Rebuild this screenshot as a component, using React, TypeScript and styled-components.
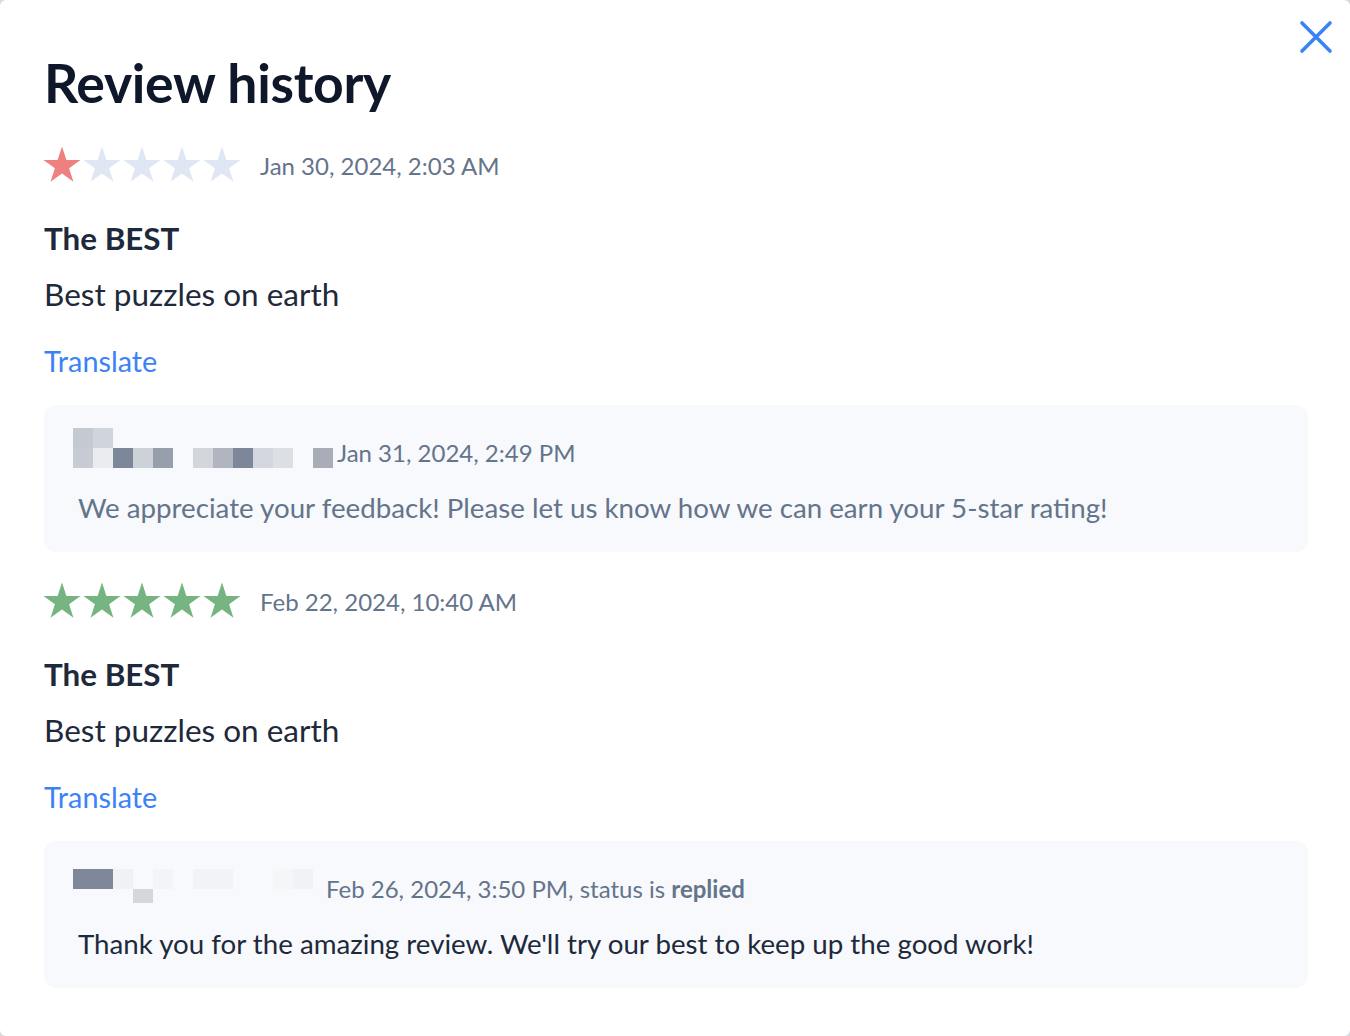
import React from 'react';
import styled, { createGlobalStyle } from 'styled-components';

const GlobalStyle = createGlobalStyle`
  html, body {
    margin: 0;
    padding: 0;
    background: #d6d9de;
  }
  body {
    font-family: Lato, "Noto Sans", "Liberation Sans", sans-serif;
    -webkit-font-smoothing: antialiased;
  }
`;

type Cell = string | null;

interface Reply {
  redacted: Cell[][];
  redactedOffset: number;
  redactedGap: number;
  date: string;
  status?: string;
  text: string;
  muted: boolean;
}

interface ReviewData {
  rating: number;
  date: string;
  title: string;
  body: string;
  reply: Reply;
}

const _ = null;

const reviews: ReviewData[] = [
  {
    rating: 1,
    date: 'Jan 30, 2024, 2:03 AM',
    title: 'The BEST',
    body: 'Best puzzles on earth',
    reply: {
      redacted: [
        ['#c4c9d2', '#d0d4db', _, _, _, _, _, _, _, _, _, _, _],
        ['#c7ccd4', '#eaecef', '#7d879a', '#cdd1d8', '#979fad', _, '#d3d6dc', '#b0b5bf', '#7d879a', '#d4d7dd', '#dcdfe3', _, '#a8adb8'],
      ],
      redactedOffset: -5,
      redactedGap: 4,
      date: 'Jan 31, 2024, 2:49 PM',
      text: 'We appreciate your feedback! Please let us know how we can earn your 5-star rating!',
      muted: true,
    },
  },
  {
    rating: 5,
    date: 'Feb 22, 2024, 10:40 AM',
    title: 'The BEST',
    body: 'Best puzzles on earth',
    reply: {
      redacted: [
        ['#7f889a', '#7f889a', '#eff1f4', _, '#f3f4f7', _, '#f2f3f6', '#f2f3f6', _, _, '#f5f6f8', '#f1f2f5'],
        [_, _, _, '#d3d7de', _, _, _, _, _, _, _, _],
      ],
      redactedOffset: 0,
      redactedGap: 13,
      date: 'Feb 26, 2024, 3:50 PM, status is ',
      status: 'replied',
      text: "Thank you for the amazing review. We'll try our best to keep up the good work!",
      muted: false,
    },
  },
];

const Card = styled.div`
  position: relative;
  box-sizing: border-box;
  min-height: 100vh;
  background: #ffffff;
  border-radius: 6px;
  padding: 50px 42px 40px 44px;
`;

const CloseButton = styled.button`
  position: absolute;
  top: 19px;
  right: 16px;
  width: 36px;
  height: 36px;
  padding: 0;
  border: none;
  background: transparent;
  cursor: pointer;
  svg {
    display: block;
  }
`;

const Title = styled.h1`
  margin: 0;
  font-size: 53.5px;
  line-height: 64px;
  font-weight: 700;
  color: #0f172a;
  letter-spacing: -0.3px;
`;

const ReviewList = styled.div`
  display: flex;
  flex-direction: column;
  gap: 29px;
  margin-top: 31px;
`;

const ReviewBlock = styled.section`
  display: flex;
  flex-direction: column;
`;

const RatingRow = styled.div`
  display: flex;
  align-items: center;
  height: 40px;
  margin-left: -2px;
`;

const Stars = styled.div`
  display: flex;
  svg {
    display: block;
  }
`;

const DateText = styled.span`
  margin-left: 18px;
  font-size: 24px;
  color: #64748b;
`;

const ReviewTitle = styled.h3`
  margin: 33px 0 0;
  font-size: 31.4px;
  line-height: 40px;
  font-weight: 700;
  color: #1e293b;
`;

const ReviewBody = styled.p`
  margin: 16px 0 0;
  font-size: 31.5px;
  line-height: 40px;
  color: #1e293b;
`;

const TranslateLink = styled.a`
  display: block;
  margin-top: 29px;
  font-size: 28.8px;
  line-height: 36px;
  color: #3b82f6;
  text-decoration: none;
  cursor: pointer;
`;

const ReplyBox = styled.div`
  margin-top: 26px;
  background: #f7f9fc;
  border-radius: 12px;
  padding: 28px 32px 26px 34px;
`;

const ReplyHeader = styled.div`
  display: flex;
  align-items: flex-start;
  height: 40px;
`;

const RedactedGrid = styled.div<{ $cols: number; $offset: number; $gap: number }>`
  display: grid;
  grid-template-columns: repeat(${(p) => p.$cols}, 20px);
  grid-auto-rows: 20px;
  margin-left: -5px;
  margin-top: ${(p) => p.$offset}px;
  margin-right: ${(p) => p.$gap}px;
`;

const Pixel = styled.div<{ $color: string | null; $short?: boolean }>`
  background: ${(p) => p.$color ?? 'transparent'};
  height: ${(p) => (p.$short ? '14px' : '20px')};
`;

const ReplyDate = styled.span`
  font-size: 24px;
  line-height: 40px;
  color: #64748b;
  b {
    font-weight: 700;
  }
`;

const ReplyText = styled.p<{ $muted: boolean }>`
  margin: 17px 0 0;
  font-size: 27.7px;
  line-height: 36px;
  color: ${(p) => (p.$muted ? '#64748b' : '#1e293b')};
`;

const STAR_POINTS =
  '20,1.5 24.38,14.97 38.55,14.97 27.09,23.3 31.46,36.78 20,28.45 8.54,36.78 12.91,23.3 1.45,14.97 15.62,14.97';

const Star: React.FC<{ color: string }> = ({ color }) => (
  <svg width="40" height="40" viewBox="0 0 40 40">
    <polygon points={STAR_POINTS} fill={color} />
  </svg>
);

const StarRating: React.FC<{ rating: number }> = ({ rating }) => {
  const filled = rating >= 4 ? '#76b481' : rating <= 2 ? '#ef8080' : '#f5c451';
  return (
    <Stars>
      {[1, 2, 3, 4, 5].map((n) => (
        <Star key={n} color={n <= rating ? filled : '#dfe7f5'} />
      ))}
    </Stars>
  );
};

const Redacted: React.FC<{ cells: Cell[][]; offset: number; gap: number }> = ({ cells, offset, gap }) => (
  <RedactedGrid $cols={cells[0].length} $offset={offset} $gap={gap}>
    {cells.map((row, r) =>
      row.map((c, i) => <Pixel key={`${r}-${i}`} $color={c} $short={offset === 0 && r === 1} />)
    )}
  </RedactedGrid>
);

const Review: React.FC<{ review: ReviewData }> = ({ review }) => (
  <ReviewBlock>
    <RatingRow>
      <StarRating rating={review.rating} />
      <DateText>{review.date}</DateText>
    </RatingRow>
    <ReviewTitle>{review.title}</ReviewTitle>
    <ReviewBody>{review.body}</ReviewBody>
    <TranslateLink>Translate</TranslateLink>
    <ReplyBox>
      <ReplyHeader>
        <Redacted cells={review.reply.redacted} offset={review.reply.redactedOffset} gap={review.reply.redactedGap} />
        <ReplyDate>
          {review.reply.date}
          {review.reply.status && <b>{review.reply.status}</b>}
        </ReplyDate>
      </ReplyHeader>
      <ReplyText $muted={review.reply.muted}>{review.reply.text}</ReplyText>
    </ReplyBox>
  </ReviewBlock>
);

export default function App() {
  return (
    <>
      <GlobalStyle />
      <Card>
        <CloseButton aria-label="Close">
          <svg width="36" height="36" viewBox="0 0 36 36">
            <path d="M4 4 L32 32 M32 4 L4 32" stroke="#3b82f6" strokeWidth="3.6" strokeLinecap="round" fill="none" />
          </svg>
        </CloseButton>
        <Title>Review history</Title>
        <ReviewList>
          {reviews.map((r, i) => (
            <Review key={i} review={r} />
          ))}
        </ReviewList>
      </Card>
    </>
  );
}
